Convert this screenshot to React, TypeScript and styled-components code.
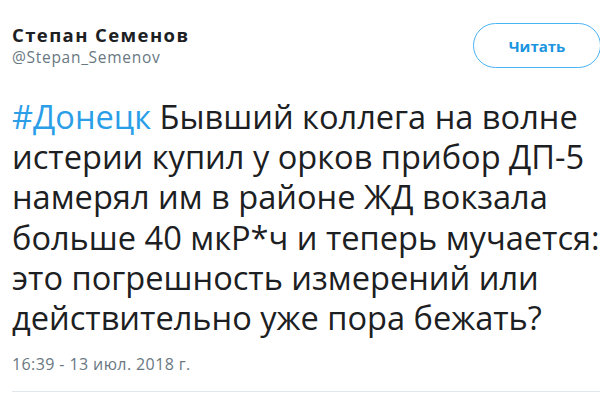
import React from "react";
import styled, { createGlobalStyle } from "styled-components";

const Global = createGlobalStyle`
  html, body { margin: 0; padding: 0; background: #ffffff; }
  body { width: 600px; height: 400px; overflow: hidden; }
`;

const Card = styled.div`
  width: 600px;
  height: 400px;
  box-sizing: border-box;
  padding: 0 0 0 12px;
  overflow: hidden;
  font-family: "Open Sans", "Noto Sans", sans-serif;
  color: #1c2022;
  display: flex;
  flex-direction: column;
`;

const Header = styled.div`
  display: flex;
  justify-content: space-between;
  align-items: flex-start;
  margin-right: -1px;
  padding-top: 23px;
`;

const Author = styled.div`
  display: flex;
  flex-direction: column;
  padding-top: 1px;
`;

const Name = styled.div`
  font-size: 18.5px;
  line-height: 22px;
  font-weight: 700;
  letter-spacing: 1.4px;
  color: #1c2022;
`;

const Handle = styled.div`
  font-size: 15.5px;
  line-height: 20px;
  letter-spacing: 0.7px;
  margin-top: 1px;
  color: #697882;
`;

const FollowButton = styled.button`
  width: 128px;
  height: 45px;
  box-sizing: border-box;
  border: 1px solid #4ab3f4;
  border-radius: 999px;
  background: #ffffff;
  color: #1b95e0;
  font-family: "Open Sans", "Noto Sans", sans-serif;
  font-weight: 700;
  font-size: 15px;
  padding: 0;
`;

const Body = styled.p`
  margin: 29px 0 0 0;
  font-size: 32.6px;
  line-height: 40.2px;
  white-space: nowrap;
  color: #1c2022;
`;

const Hashtag = styled.span`
  color: #2b9ee8;
`;

const Meta = styled.div`
  margin-top: 16px;
  font-size: 16px;
  line-height: 20px;
  letter-spacing: 0.4px;
  color: #697882;
`;

const Divider = styled.div`
  margin-top: 17px;
  height: 1px;
  background: #e1e8ed;
`;

export default function App() {
  const lines = [
    "истерии купил у орков прибор ДП-5",
    "намерял им в районе ЖД вокзала",
    "больше 40 мкР*ч и теперь мучается:",
    "это погрешность измерений или",
    "действительно уже пора бежать?",
  ];
  return (
    <>
      <Global />
      <Card>
        <Header>
          <Author>
            <Name>Степан Семенов</Name>
            <Handle>@Stepan_Semenov</Handle>
          </Author>
          <FollowButton>Читать</FollowButton>
        </Header>
        <Body>
          <Hashtag>#Донецк</Hashtag> Бывший коллега на волне
          {lines.map((l) => (
            <React.Fragment key={l}>
              <br />
              {l}
            </React.Fragment>
          ))}
        </Body>
        <Meta>16:39 - 13 июл. 2018 г.</Meta>
        <Divider />
      </Card>
    </>
  );
}
